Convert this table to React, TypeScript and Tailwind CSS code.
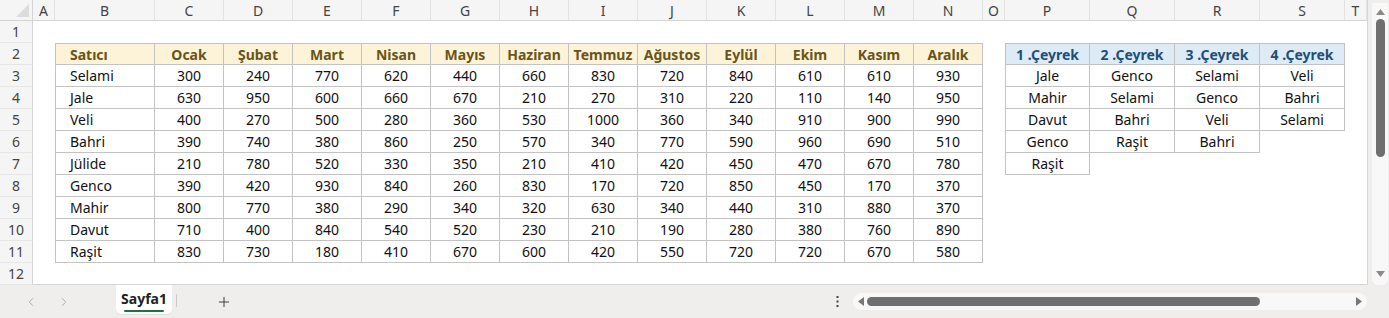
import { ChevronLeft, ChevronRight, Plus } from 'lucide-react';

const months = ['Ocak', 'Şubat', 'Mart', 'Nisan', 'Mayıs', 'Haziran', 'Temmuz', 'Ağustos', 'Eylül', 'Ekim', 'Kasım', 'Aralık'];

const sales: [string, number[]][] = [
  ['Selami', [300, 240, 770, 620, 440, 660, 830, 720, 840, 610, 610, 930]],
  ['Jale', [630, 950, 600, 660, 670, 210, 270, 310, 220, 110, 140, 950]],
  ['Veli', [400, 270, 500, 280, 360, 530, 1000, 360, 340, 910, 900, 990]],
  ['Bahri', [390, 740, 380, 860, 250, 570, 340, 770, 590, 960, 690, 510]],
  ['Jülide', [210, 780, 520, 330, 350, 210, 410, 420, 450, 470, 670, 780]],
  ['Genco', [390, 420, 930, 840, 260, 830, 170, 720, 850, 450, 170, 370]],
  ['Mahir', [800, 770, 380, 290, 340, 320, 630, 340, 440, 310, 880, 370]],
  ['Davut', [710, 400, 840, 540, 520, 230, 210, 190, 280, 380, 760, 890]],
  ['Raşit', [830, 730, 180, 410, 670, 600, 420, 550, 720, 720, 670, 580]],
];

const quarters: string[][] = [
  ['Jale', 'Mahir', 'Davut', 'Genco', 'Raşit'],
  ['Genco', 'Selami', 'Bahri', 'Raşit'],
  ['Selami', 'Genco', 'Veli', 'Bahri'],
  ['Veli', 'Bahri', 'Selami'],
];

const letters = ['A', 'B', 'C', 'D', 'E', 'F', 'G', 'H', 'I', 'J', 'K', 'L', 'M', 'N', 'O', 'P', 'Q', 'R', 'S', 'T'];

function SalesCell({ row, col }: { row: number; col: number }) {
  // row: 0 = header (sheet row 2), col: 0 = Satıcı
  const isHeader = row === 0;
  const text = isHeader ? (col === 0 ? 'Satıcı' : months[col - 1]) : col === 0 ? sales[row - 1][0] : String(sales[row - 1][1][col - 1]);
  return (
    <div
      className={`flex items-center border-r border-b border-[#c3c3c3] ${isHeader ? 'border-t bg-[#fcf3d9] font-bold text-[#6b5417]' : 'text-[#111]'} ${col === 0 ? 'border-l justify-start pl-[14px]' : 'justify-center'}`}
    >
      {text}
    </div>
  );
}

function QuarterCell({ row, col }: { row: number; col: number }) {
  const isHeader = row === 0;
  const list = quarters[col];
  const text = isHeader ? `${col + 1} .Çeyrek` : list[row - 1];
  if (!text) return <div />;
  return (
    <div
      className={`flex items-center justify-center border-r border-b border-[#c3c3c3] ${isHeader ? 'border-t bg-[#ddebf7] font-bold text-[#1f4e79]' : 'text-[#111]'} ${col === 0 ? 'border-l' : ''}`}
    >
      {text}
    </div>
  );
}

function Sheet() {
  const rows = Array.from({ length: 12 }, (_, i) => i + 1);
  return (
    <div className="grid h-[285px] w-[1368px] grid-cols-[33px_22px_100px_repeat(12,69px)_22px_repeat(4,85px)_1fr] grid-rows-[21px_repeat(12,22px)] border-r border-b border-[#d6d6d6] bg-white text-[14px]">
      <div className="relative border-r border-b border-[#d4d4d4] bg-[#f5f5f5]">
        <svg className="absolute right-[3px] bottom-[3px]" width="13" height="13" viewBox="0 0 13 13">
          <polygon points="13,0 13,13 0,13" fill="#dcdcdc" />
        </svg>
      </div>
      {letters.map((l) => (
        <div key={l} className="flex items-center justify-center border-r border-b border-r-[#e2e2e2] border-b-[#d4d4d4] bg-[#f5f5f5] text-[#444]">
          {l}
        </div>
      ))}

      {rows.map((r) => (
        <Row key={r} r={r} />
      ))}
    </div>
  );
}

function Row({ r }: { r: number }) {
  const salesRow = r - 2;
  const quarterRow = r - 2;
  return (
    <>
      <div className="flex items-center justify-center border-r border-b border-r-[#d4d4d4] border-b-[#e6e6e6] bg-[#f5f5f5] text-[#444]">{r}</div>
      <div />
      {Array.from({ length: 13 }, (_, c) =>
        salesRow >= 0 && salesRow <= 9 ? <SalesCell key={c} row={salesRow} col={c} /> : <div key={c} />
      )}
      <div />
      {Array.from({ length: 4 }, (_, c) =>
        quarterRow >= 0 && quarterRow <= 5 ? <QuarterCell key={c} row={quarterRow} col={c} /> : <div key={c} />
      )}
      <div />
    </>
  );
}

function VerticalScroll() {
  return (
    <div className="flex w-[21px] flex-col items-center pt-[3px] pl-[3px]">
      <div className="flex h-[285px] w-[16px] flex-col items-center rounded-b-[6px] bg-[#f9f8f8]">
        <svg className="mt-[6px]" width="9" height="6" viewBox="0 0 9 6">
          <polygon points="4.5,0 9,6 0,6" fill="#8a8a8a" />
        </svg>
        <div className="mt-[4px] h-[138px] w-[9px] rounded-full bg-[#6f6f6f]" />
        <div className="flex-1" />
        <svg className="mb-[8px]" width="9" height="6" viewBox="0 0 9 6">
          <polygon points="0,0 9,0 4.5,6" fill="#8a8a8a" />
        </svg>
      </div>
    </div>
  );
}

function BottomBar() {
  return (
    <div className="flex h-[33px] items-start">
      <div className="flex h-full items-center gap-[19px] pl-[24px] text-[#a3a3a3]">
        <ChevronLeft size={14} strokeWidth={1.5} />
        <ChevronRight size={14} strokeWidth={1.5} />
      </div>
      <div className="ml-[45px] flex h-[29px] w-[56px] flex-col items-center justify-center rounded-b-[5px] bg-white pt-[2px] shadow-[0_1px_1px_rgba(0,0,0,0.05)]">
        <span className="text-[14px] leading-[18px] font-bold text-[#222]">Sayfa1</span>
        <span className="mt-[2px] h-[2px] w-[40px] rounded-full bg-[#1e7145]" />
      </div>
      <div className="mt-[9px] ml-[4px] h-[13px] w-px bg-[#c9c9c9]" />
      <div className="flex h-full w-[94px] items-center justify-center text-[#333]">
        <Plus size={16} strokeWidth={1.4} />
      </div>
      <div className="flex-1" />
      <div className="flex h-full items-center pr-[14px]">
        <svg width="3" height="11" viewBox="0 0 3 11">
          <rect x="0.5" y="0" width="2" height="2" fill="#444" />
          <rect x="0.5" y="4.5" width="2" height="2" fill="#444" />
          <rect x="0.5" y="9" width="2" height="2" fill="#444" />
        </svg>
      </div>
      <div className="mt-[8px] mr-[22px] flex h-[17px] w-[514px] items-center rounded-full bg-[#f9f8f8] px-[5px]">
        <svg width="6" height="9" viewBox="0 0 6 9">
          <polygon points="6,0 6,9 0,4.5" fill="#777" />
        </svg>
        <div className="ml-[3px] h-[9px] w-[393px] rounded-full bg-[#6f6f6f]" />
        <div className="flex-1" />
        <svg width="6" height="9" viewBox="0 0 6 9">
          <polygon points="0,0 6,4.5 0,9" fill="#777" />
        </svg>
      </div>
    </div>
  );
}

export default function App() {
  return (
    <div className="flex h-[318px] w-[1389px] flex-col overflow-hidden bg-[#f0eded] font-['Noto_Sans',sans-serif]">
      <div className="flex h-[285px]">
        <Sheet />
        <VerticalScroll />
      </div>
      <BottomBar />
    </div>
  );
}
